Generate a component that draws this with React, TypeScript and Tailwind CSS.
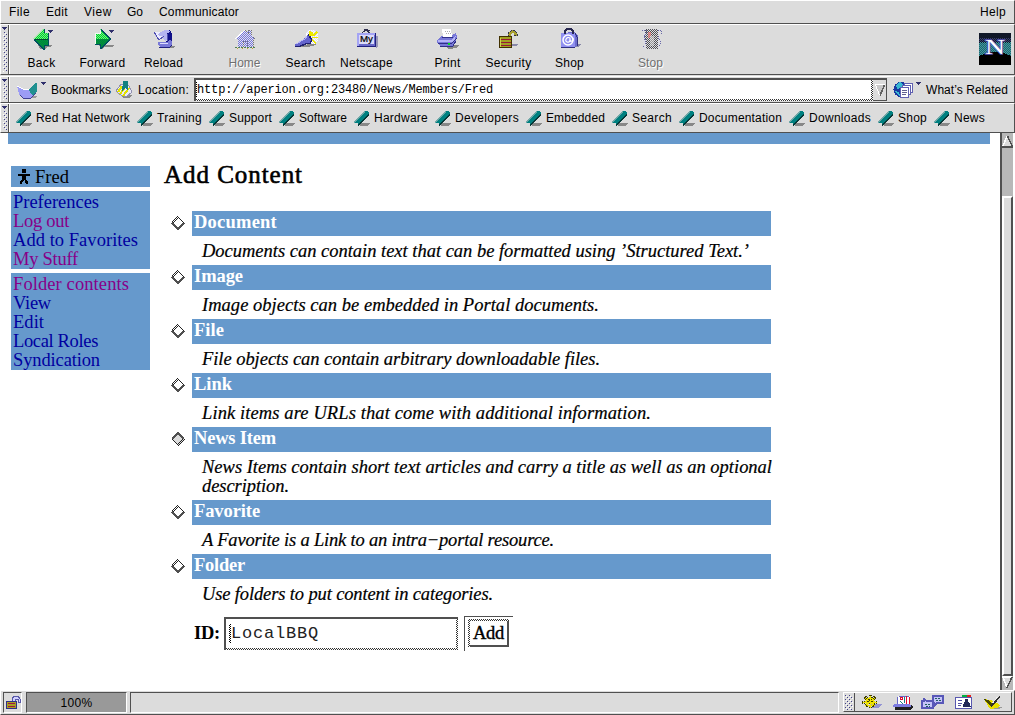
import { useLayoutEffect, useRef, type ReactNode } from "react";

const DITHER = "bg-[repeating-conic-gradient(#333_0_25%,#fff_0_50%)] bg-[length:2px_2px]";
const RAISED = "border-t border-l border-b border-r border-t-white border-l-white border-b-[#505050] border-r-[#505050]";
const SUNKEN = "border-t border-l border-b border-r border-t-[#505050] border-l-[#505050] border-b-white border-r-white";

/** Single line of text whose tracking is adjusted so that it spans `w` pixels. */
function Fit({ w, className = "", children }: { w: number; className?: string; children: string }) {
  const ref = useRef<HTMLSpanElement>(null);
  useLayoutEffect(() => {
    const el = ref.current;
    if (!el) return;
    el.style.letterSpacing = "0px";
    const natural = el.getBoundingClientRect().width;
    el.style.letterSpacing = `${(w - natural) / children.length}px`;
  }, [w, children]);
  return (
    <span ref={ref} className={`inline-block whitespace-pre ${className}`}>
      {children}
    </span>
  );
}

function Svg({ w, h, children, className = "" }: { w: number; h: number; children: ReactNode; className?: string }) {
  return (
    <svg width={w} height={h} viewBox={`0 0 ${w} ${h}`} shapeRendering="crispEdges" className={`block shrink-0 ${className}`}>
      {children}
    </svg>
  );
}

function Defs() {
  return (
    <svg width="0" height="0" className="absolute">
      <defs>
        <pattern id="dg" width="2" height="2" patternUnits="userSpaceOnUse">
          <rect width="2" height="2" fill="#00d030" />
          <path d="M0 0h1v1H0zM1 1h1v1H1z" fill="#70f080" />
        </pattern>
        <pattern id="dd" width="2" height="2" patternUnits="userSpaceOnUse">
          <rect width="2" height="2" fill="#008040" />
          <path d="M0 0h1v1H0zM1 1h1v1H1z" fill="#009838" />
        </pattern>
        <pattern id="dp" width="2" height="2" patternUnits="userSpaceOnUse">
          <path d="M0 0h1v1H0zM1 1h1v1H1z" fill="#7474dc" />
        </pattern>
        <pattern id="dk" width="2" height="2" patternUnits="userSpaceOnUse">
          <path d="M0 0h1v1H0zM1 1h1v1H1z" fill="#222" />
        </pattern>
        <pattern id="dt" width="2" height="2" patternUnits="userSpaceOnUse">
          <path d="M0 0h1v1H0zM1 1h1v1H1z" fill="#409c9c" />
        </pattern>
        <pattern id="dots" width="4" height="4" patternUnits="userSpaceOnUse">
          <path d="M0 0h1v1H0zM2 2h1v1H2z" fill="#404088" />
          <path d="M1 1h1v1H1zM3 3h1v1H3z" fill="#fff" />
        </pattern>
      </defs>
    </svg>
  );
}

const Caret = ({ x, y }: { x: number; y: number }) => (
  <path d={`M${x} ${y}h5v1h-1v1h-1v1h-1v-1h-1v-1h-1z`} fill="#30306c" />
);

const icons: Record<string, ReactNode> = {
  Back: (
    <>
      <path d="M8 17h14l-2 2h-3l-2 2h-5z" fill="#888" />
      <path d="M4 11 13 1h2v4h3v6z" fill="url(#dg)" />
      <path d="M4 11h14v6h-3v4h-2z" fill="url(#dd)" />
      <path d="M3.500 11 13 1.500" fill="none" stroke="#b0e8b0" />
      <path d="M14.500 1v4M18.500 5v12h-4v4h-1L4 11.500" fill="none" stroke="#005060" />
      <path d="M5 11.500h13" stroke="#004830" />
      <Caret x={18} y={2} />
    </>
  ),
  Forward: (
    <>
      <path d="M8 17h16l-3 2h-7l-3 2z" fill="#888" />
      <path d="M4 5h5V1h1l10 10H4z" fill="url(#dg)" />
      <path d="M4 11h16L10 21H9v-4H4z" fill="url(#dd)" />
      <path d="M4.500 16V5.500h5V1.500" fill="none" stroke="#f0fff0" />
      <path d="M10 1.500l9.500 9.500M4 16.500h5V20.500h1l10-10" fill="none" stroke="#005060" />
      <Caret x={18} y={2} />
    </>
  ),
  Reload: (
    <>
      <path d="M8 18h15l-2 2H10z" fill="#888" />
      <path d="M13 2h5l2 4v9l-5 3-3-3 3-3z" fill="#101088" />
      <path d="M9 4l4-2h4l1 2-3 1 0 7-2 1-3-4-4 3-4-7z" fill="#b4b4f0" />
      <path d="M2 4h6l-2 3 5 2-2 2H6z" fill="#ececff" />
      <path d="M2 4l5 8 5-4M15 6v7" fill="none" stroke="#5050b0" />
      <path d="M6 14h9l3-2 2 1v5l-3 1H8l-2-2z" fill="#7878d8" />
      <path d="M7 19h11l2-2" fill="none" stroke="#202080" />
      <path d="M8 15.500h8" stroke="#dcdcff" />
    </>
  ),
  Home: (
    <>
      <path d="M2 11 12 2l3 3V2h3v5l4 4h-2v8H5v-8z" fill="#e4e4ec" />
      <path d="M2 11 12 2l10 9h-2v8H5v-8H2zM15 5V2h3v6z" fill="url(#dp)" />
      <path d="M2 11 12 2" fill="none" stroke="#fff" />
      <path d="M12 2l3 3V2h3v5l4 4M20 12v7M10 19v-6h4v6" fill="none" stroke="#777" strokeDasharray="1 1" />
      <path d="M2 19.500h21" stroke="#508050" strokeDasharray="2 1" />
      <path d="M4 20.500h18" stroke="#c0a030" strokeDasharray="1 4" />
    </>
  ),
  Search: (
    <>
      <path d="M12 4l3-2h6l3 4v6l-3 4h-6l-3-4z" fill="#fff" />
      <path d="M12 4l3-2h6l3 4v6l-3 4h-6z" fill="url(#dp)" opacity=".25" />
      <path d="M5 19l10-3h8l-4 2-6 1z" fill="#888" />
      <path d="M1 16l9-5 1-2 3-2 4 5-2 4-4 0-7 3H2z" fill="#6464cc" />
      <path d="M2 16l9-5 2-3" fill="none" stroke="#b4b4f8" />
      <path d="M1 18.500h4l8-3h3l2-4-4-5" fill="none" stroke="#202070" strokeWidth="1.500" />
      <path d="M16 3v4h2V4M19 8l4-4M18 9.500h6M18 12l4 3" stroke="#ece800" fill="none" strokeWidth="1.500" />
    </>
  ),
  Netscape: (
    <>
      <path d="M4 20h17V8h2v10l-2 2H5z" fill="#9898b8" />
      <path d="M2 5h19v14H2z" fill="#6868c8" />
      <path d="M2 5h18v2H4v11H2z" fill="#a4a4f4" />
      <path d="M4 7h15v9H4z" fill="#dadaf8" />
      <path d="M2 18.500h18.500V5" fill="none" stroke="#202080" />
      <path d="M7 5 11 2l4 3M9 1.500h3v2M13 3l2-1" fill="none" stroke="#303050" />
      <text x="5" y="14" fontSize="9" fontFamily="Liberation Sans" textLength="13" lengthAdjust="spacingAndGlyphs" stroke="#000" strokeWidth=".2">My</text>
    </>
  ),
  Print: (
    <>
      <path d="M8 17h16l-4 3-7 1z" fill="#888" />
      <path d="M1 12l5-4h9l5-3 1 4-1 4-3 5H5l-4-3z" fill="#7878d8" />
      <path d="M2 12h14l4-5-1 4-3 3H2z" fill="#b4b4f8" />
      <path d="M6 1h9l1 8H7z" fill="#fff" />
      <path d="M9 3.500h5M10 5.500h5" stroke="#aaa" strokeDasharray="1 1" />
      <path d="M6 9.500h11M2 15h14l5-5M4 18h13l3-5" fill="none" stroke="#303088" />
      <path d="M12 16h2" stroke="#00e020" strokeWidth="2" />
    </>
  ),
  Security: (
    <>
      <path d="M14 16h8l-3 2h-5z" fill="#8888a8" />
      <path d="M11 9V5l3-3h4l2 3v3h-3V5h-2l-1 1v4z" fill="#a8a030" />
      <path d="M11.500 9V5l3-2.500h3l2.500 3v2h-3V5.500" fill="none" stroke="#303050" strokeDasharray="2 1" />
      <path d="M2 9h13v11H2z" fill="#a0a020" />
      <path d="M4 11.500h10M4 14.500h10M4 17.500h10" stroke="#981838" />
      <path d="M2.500 8.500h12v11h-12z" fill="none" stroke="#403000" />
      <path d="M3 10v9" stroke="#d0d050" />
    </>
  ),
  Shop: (
    <>
      <path d="M15 16h9l-4 3h-5z" fill="#8888a8" />
      <path d="M3 5l13-1 4 3v10l-3 2H3z" fill="#6c6ccc" />
      <path d="M3 5h14v14H3z" fill="#9090f0" />
      <path d="M7 6V3l2-2h4l2 2v3" fill="none" stroke="#282850" strokeWidth="1.500" />
      <path d="M17 5l2 4v9M3 19h14" fill="none" stroke="#303080" />
      <circle cx="10" cy="12" r="5" fill="none" stroke="#fff" shapeRendering="auto" strokeWidth="1.500" />
      <path d="M12 14V10c-3-2-6 3-3 4s3-2 3-3c0 4 4 2 3-1" fill="none" stroke="#fff" shapeRendering="auto" strokeWidth="1.200" />
    </>
  ),
  Stop: (
    <>
      <path d="M3 1h19l-2 6 2 5-2 5 1 4H4l1-5-2-4 2-5z" fill="#dcdce4" />
      <path d="M6 1h13v20H7z" fill="url(#dk)" opacity=".75" />
      <path d="M3 2h4v4l-2 3 2 5-3 5M19 2h3v4l-3 3 3 5-2 5" fill="none" stroke="#6868a8" strokeDasharray="1 1" />
      <path d="M9 4h3v4h-1v2H9z" fill="#f08080" opacity=".7" />
      <path d="M11 8h4v10h-4z" fill="#ddd" opacity=".5" />
    </>
  ),
};

const tools: { n: string; w: number; off?: boolean; gap?: boolean }[] = [
  { n: "Back", w: 28 },
  { n: "Forward", w: 46 },
  { n: "Reload", w: 39 },
  { n: "Home", w: 32, off: true, gap: true },
  { n: "Search", w: 40 },
  { n: "Netscape", w: 53 },
  { n: "Print", w: 26, gap: true },
  { n: "Security", w: 46 },
  { n: "Shop", w: 29 },
  { n: "Stop", w: 25, off: true, gap: true },
];

const links: [string, number][] = [
  ["Red Hat Network", 94],
  ["Training", 45],
  ["Support", 43],
  ["Software", 48],
  ["Hardware", 54],
  ["Developers", 64],
  ["Embedded", 59],
  ["Search", 40],
  ["Documentation", 83],
  ["Downloads", 62],
  ["Shop", 29],
  ["News", 31],
];

type Entry = { title: string; w: number; lines: [string, number][]; on?: boolean };
const entries: Entry[] = [
  { title: "Document", w: 83, lines: [["Documents can contain text that can be formatted using ’Structured Text.’", 547]] },
  { title: "Image", w: 49, lines: [["Image objects can be embedded in Portal documents.", 397]] },
  { title: "File", w: 30, lines: [["File objects can contain arbitrary downloadable files.", 398]] },
  { title: "Link", w: 38, lines: [["Link items are URLs that come with additional information.", 449]] },
  {
    title: "News Item",
    w: 82,
    on: true,
    lines: [
      ["News Items contain short text articles and carry a title as well as an optional", 570],
      ["description.", 87],
    ],
  },
  { title: "Favorite", w: 66, lines: [["A Favorite is a Link to an intra−portal resource.", 352]] },
  { title: "Folder", w: 51, lines: [["Use folders to put content in categories.", 291]] },
];

const BookmarkLeaf = () => (
  <Svg w={16} h={17}>
    <path d="M5 13h11l-2 3H6z" fill="#888" />
    <path d="M0 13 11 1h2l2 2v1L4 15v-2z" fill="#008080" />
    <path d="M0 12.500 11 1.500" stroke="#70a8a8" />
    <path d="M4 15.500 15 4.500" fill="none" stroke="#083838" />
  </Svg>
);

function Grip({ h }: { h: number }) {
  return (
    <div className="w-2 shrink-0 border-r border-[#505050] pl-px pt-px">
      <Svg w={6} h={h}>
        <rect x="1" y="6" width="4" height={h - 8} fill="url(#dots)" />
        <Caret x={0} y={1} />
      </Svg>
    </div>
  );
}

function MenuBar() {
  const items: [string, number, string][] = [
    ["File", 21, "ml-[8px]"],
    ["Edit", 22, "ml-[16px]"],
    ["View", 28, "ml-[16px]"],
    ["Go", 16, "ml-[15px]"],
    ["Communicator", 80, "ml-[16px]"],
  ];
  return (
    <div className={`flex h-6 w-full items-center ${RAISED}`}>
      {items.map(([t, w, m]) => (
        <Fit key={t} w={w} className={m}>{t}</Fit>
      ))}
      <Fit w={26} className="mr-2 ml-auto">Help</Fit>
    </div>
  );
}

function Toolbar() {
  return (
    <div className={`flex h-[51px] ${RAISED}`}>
      <Grip h={48} />
      <div className="flex flex-1 border-l border-white pl-px">
        {tools.map((t) => (
          <div key={t.n} className={`flex w-[61px] shrink-0 flex-col items-center pt-[3px] ${t.gap ? "ml-5" : ""}`}>
            <Svg w={24} h={22}>{icons[t.n]}</Svg>
            <Fit w={t.w} className={`mt-[6px] leading-[14px] ${t.off ? "text-[#707070] [text-shadow:1px_1px_0_#fff]" : ""}`}>{t.n}</Fit>
          </div>
        ))}
        <Svg w={32} h={32} className="mt-2 mr-[3px] ml-auto">
          <rect width="32" height="32" fill="#101828" />
          <rect y="5" width="32" height="6" fill="url(#dp)" opacity=".4" />
          <rect y="10" width="32" height="13" fill="#206070" />
          <rect y="9" width="32" height="14" fill="url(#dt)" />
          <path d="M0 23l5-2 6-2h10l6 2 5 2v9H0z" fill="#000" />
          <text x="6" y="20.500" fontFamily="Liberation Serif" fontSize="22" textLength="20" lengthAdjust="spacingAndGlyphs" fill="#fff" stroke="#5050b0" strokeWidth="1.500" paintOrder="stroke">N</text>
        </Svg>
      </div>
    </div>
  );
}

function LocationBar() {
  return (
    <div className={`mt-px flex h-[27px] ${RAISED}`}>
      <Grip h={24} />
      <div className="flex flex-1 items-center border-l border-white">
        <Svg w={30} h={18} className="ml-[6px]">
          <path d="M8 15h13l-2 2h-9z" fill="#999" />
          <path d="M1 5l6 3h7l5-3 1 1v7l-5 4H6l-3-4z" fill="#9c9cf4" />
          <path d="M1 5l6 3h7l4-3" fill="none" stroke="#fff" />
          <path d="M13 8l6-6h2v9l-4 3-3-2z" fill="#209090" />
          <path d="M4 14l3 3h8l5-5" fill="none" stroke="#404090" />
          <Caret x={25} y={1} />
        </Svg>
        <Fit w={60} className="ml-[5px]">Bookmarks</Fit>
        <Svg w={17} h={17} className="ml-[5px]">
          <path d="M5 14h11l-3 3H7z" fill="#888" />
          <path d="M0 10 5 3l8 2 3 6-6 5-7-3z" fill="#e8e8f8" stroke="#9090b0" />
          <path d="M2 11l4-6M4 13l6-8M7 15l6-8" stroke="#e0e000" strokeWidth="2" />
          <path d="M7 0h5v10l-3-3-3 3z" fill="#108080" />
        </Svg>
        <Fit w={51} className="ml-[5px]">Location:</Fit>
        <div className="ml-[5px] flex h-[23px] w-[693px] border-t-2 border-l-2 border-[#505050]">
          <div className={`flex flex-1 pr-[2px] pb-[2px] ${DITHER}`}>
            <div className="flex flex-1 items-center bg-white">
              <div className="h-[15px] w-px border-l border-dotted border-black" />
              <Fit w={296} className="font-['Liberation_Mono',monospace] text-[12px] text-black">http://aperion.org:23480/News/Members/Fred</Fit>
            </div>
          </div>
          <div className="flex w-[14px] items-center justify-center border-r border-b border-[#505050]">
            <Svg w={10} h={12}>
              <path d="M0 0h10L5 12z" fill="#c8c8c8" />
              <path d="M0 .5h10M.5 1l4 10" stroke="#fff" />
              <path d="M5 11.500 9.500 1" stroke="#606060" strokeWidth="1.500" />
            </Svg>
          </div>
        </div>
        <Svg w={28} h={18} className="ml-[6px]">
          <circle cx="8" cy="8.500" r="7.500" fill="#1838a0" />
          <path d="M3 4l4-3 3 2-2 4-4 1zM2 10l4 1 1 4-3-2z" fill="#38b8d0" />
          <path d="M11.500 2.500h8v9h-8z" fill="#fff" stroke="#6060b0" />
          <path d="M9.500 4.500h8v9h-8z" fill="#fff" stroke="#6060b0" />
          <path d="M7.500 6.500h8v10h-8z" fill="#fff" stroke="#6060b0" />
          <path d="M9 9.500h5M9 11.500h5M9 13.500h4" stroke="#606090" />
          <Caret x={23} y={1} />
        </Svg>
        <Fit w={82} className="ml-[5px]">What’s Related</Fit>
      </div>
    </div>
  );
}

function PersonalBar() {
  return (
    <div className={`flex h-[30px] ${RAISED}`}>
      <Grip h={27} />
      <div className="flex flex-1 items-center border-l border-white pl-[6px]">
        {links.map(([t, w]) => (
          <div key={t} className="mr-[7px] flex items-center gap-1">
            <BookmarkLeaf />
            <Fit w={w}>{t}</Fit>
          </div>
        ))}
      </div>
    </div>
  );
}

function SideLink({ w, visited, children }: { w: number; visited?: boolean; children: string }) {
  return (
    <div className={`h-[19px] leading-[19px] ${visited ? "text-[#880088]" : "text-[#0000a0]"}`}>
      <Fit w={w}>{children}</Fit>
    </div>
  );
}

function Sidebar() {
  return (
    <div className="mt-[22px] ml-[11px] flex w-[139px] shrink-0 flex-col gap-1">
      <div className="flex h-[21px] items-center bg-[#6699cc] pl-[7px]">
        <Svg w={12} h={15}>
          <path d="M4 0h4v4H4zM0 5h12v2H8v3l2 3v2H8l-1-3-1-1-1 1-1 3H2v-2l2-3V7H0z" />
        </Svg>
        <Fit w={34} className="ml-[5px]">Fred</Fit>
      </div>
      <div className="bg-[#6699cc] pt-[2px] pl-[2px]">
        <SideLink w={86}>Preferences</SideLink>
        <SideLink w={56} visited>Log out</SideLink>
        <SideLink w={125}>Add to Favorites</SideLink>
        <SideLink w={65} visited>My Stuff</SideLink>
      </div>
      <div className="bg-[#6699cc] pt-[2px] pl-[2px]">
        <SideLink w={116} visited>Folder contents</SideLink>
        <SideLink w={38}>View</SideLink>
        <SideLink w={31}>Edit</SideLink>
        <SideLink w={85}>Local Roles</SideLink>
        <SideLink w={87}>Syndication</SideLink>
      </div>
    </div>
  );
}

const Radio = ({ on }: { on?: boolean }) => (
  <Svg w={14} h={14} className="mt-[5px]">
    <path d="M1 7 7 1l6 6-6 6z" fill={on ? "#dcdcdc" : "#fff"} />
    <path d="M1 7l6 6 6-6" fill="none" stroke={on ? "url(#dk)" : "#505050"} strokeWidth="2" />
    <path d="M1 7l6-6 6 6" fill="none" stroke={on ? "#505050" : "url(#dk)"} strokeWidth="2" />
  </Svg>
);

function Main() {
  return (
    <div className="ml-[14px] flex-1 pt-[16px]">
      <h2 className="h-[51px] text-[25px] leading-[30px] [-webkit-text-stroke:0.6px_#000]">
        <Fit w={139}>Add Content</Fit>
      </h2>
      {entries.map((e) => (
        <div key={e.title} className="flex">
          <div className="w-7 shrink-0 pl-[7px]">
            <Radio on={e.on} />
          </div>
          <div className="w-[579px]">
            <div className="h-[25px] bg-[#6699cc] pl-[2px] leading-[22px] font-bold text-white">
              <Fit w={e.w}>{e.title}</Fit>
            </div>
            <div className="pt-[6px] pb-1 pl-[10px] italic [-webkit-text-stroke:0.2px_#000]">
              {e.lines.map(([t, w]) => (
                <div key={t} className="h-[19px] leading-[19px]">
                  <Fit w={w}>{t}</Fit>
                </div>
              ))}
            </div>
          </div>
        </div>
      ))}
      <div className="mt-[8px] flex h-[35px] items-start pl-[30px]">
        <Fit w={26} className="mt-[7px] leading-[20px] font-bold">ID:</Fit>
        <div className="mt-px ml-1 flex h-[33px] w-[234px] border-t-2 border-l-2 border-[#505050]">
          <div className={`flex flex-1 pr-[2px] pb-[2px] ${DITHER}`}>
            <div className="flex flex-1 items-center bg-white pl-[3px]">
              <div className="h-[19px] w-[2px] bg-[repeating-conic-gradient(#000_0_25%,#fff_0_50%)] bg-[length:2px_2px]" />
              <Fit w={88} className="font-['Liberation_Mono',monospace] text-[17px] text-[#222]">LocalBBQ</Fit>
            </div>
          </div>
        </div>
        <div className="ml-[6px] h-[35px] w-[49px] border-t border-l border-[#505050] pt-[2px] pl-[3px]">
          <div className={`h-[28px] w-[41px] pt-[2px] pl-[2px] ${DITHER}`}>
            <div className="flex h-[26px] w-[39px] items-center border-r-2 border-b-2 border-[#505050] bg-white pl-[3px]">
              <Fit w={31} className="[-webkit-text-stroke:0.4px_#000]">Add</Fit>
            </div>
          </div>
        </div>
      </div>
    </div>
  );
}

function Scrollbar() {
  return (
    <div className="flex w-[15px] shrink-0 border-r border-white pr-px">
      <div className="flex w-full flex-col border-l-2 border-[#505050] bg-[#b8b8b8]">
        <Svg w={11} h={13} className="mt-[2px]">
          <path d="M5 1 11 12H0z" fill="#dcdcdc" />
          <path d="M5 1 .5 12" stroke="#fff" strokeWidth="1.500" />
          <path d="M5.500 1l5 11H0" fill="none" stroke="#505050" strokeWidth="1.500" />
        </Svg>
        <div className="mt-[48px] flex-1 border-t-2 border-r-2 border-b-2 border-l-2 border-t-white border-r-[#505050] border-b-[#505050] border-l-white bg-[#dcdcdc]" />
        <Svg w={11} h={13} className="mb-[1px]">
          <path d="M0 1h11L5 12z" fill="#dcdcdc" />
          <path d="M0 1h10M1 1l4 11" stroke="#fff" strokeWidth="1.500" />
          <path d="M5 12 10 1" stroke="#505050" strokeWidth="1.500" />
        </Svg>
      </div>
    </div>
  );
}

function StatusBar() {
  return (
    <div className={`flex h-[25px] w-full pt-px pl-[2px] ${RAISED}`}>
      <div className={`flex h-[21px] w-[19px] items-center ${SUNKEN}`}>
        <Svg w={16} h={15} className="ml-px">
          <path d="M7 6V4l2-3h4l2 3v3h-2V4h-3v4z" fill="#d0d0ff" stroke="#5858a8" />
          <path d="M1 6.500h10v7H1z" fill="#a8a020" stroke="#303088" />
          <path d="M3 8.500h7M3 11.500h7" stroke="#a01840" />
        </Svg>
      </div>
      <div className={`ml-[4px] flex h-[21px] w-[101px] items-center justify-center bg-[#999] ${SUNKEN}`}>
        <Fit w={32}>100%</Fit>
      </div>
      <div className={`ml-[3px] h-[21px] w-[709px] ${SUNKEN}`} />
      <div className={`ml-[4px] flex h-[20px] w-[169px] ${RAISED}`}>
        <div className="w-[11px] border-r border-[#505050] pt-[2px] pl-px">
          <Svg w={8} h={15}>
            <rect width="8" height="15" fill="url(#dots)" />
          </Svg>
        </div>
        <div className="flex items-center gap-[11px] pl-[6px]">
          <Svg w={21} h={15}>
            <path d="M10 9h11l-4 4h-6z" fill="#9494d4" />
            <path d="M9 0v14M1 7h16M4 2l10 10M14 2 4 12" stroke="#404000" strokeDasharray="1 1" strokeWidth="3" />
            <circle cx="9" cy="7" r="4" fill="none" stroke="#e8dc00" strokeWidth="1.500" />
            <path d="M9 1v12M2 7h14M4 3l10 8M14 3l-10 8" stroke="#f0e400" />
          </Svg>
          <Svg w={20} h={15}>
            <path d="M3 10h16l1 2-2 3H2z" fill="#202020" />
            <path d="M5 1h12v9H4z" fill="#fff" />
            <path d="M4.500 10V2M6 1.500h10" stroke="#6868c8" fill="none" />
            <path d="M7 2h2v2H7zM13 1v8M16 2v8" stroke="#e01030" fill="none" />
            <path d="M11 2v6M7 6l3 3" stroke="#208080" />
            <path d="M1 9h14l3 1v2H0z" fill="#7c7ce0" />
          </Svg>
          <Svg w={23} h={15} className="-ml-[3px]">
            <path d="M3 6V4l3 2h6v7H1V6z" fill="#c4c4f8" stroke="#5858b8" strokeWidth="1.500" />
            <path d="M12 1h10v7h-6l-3 3V8h-1z" fill="#c4c4f8" stroke="#5858b8" strokeWidth="1.500" />
            <path d="M4 9.500h5M5 11.500h4M14 3.500h5M15 5.500h5" stroke="#206060" strokeDasharray="2 1" />
          </Svg>
          <Svg w={17} h={14}>
            <path d="M.5 2.500h16v11H.5z" fill="#fff" stroke="#5858b0" />
            <path d="M3 5.500h4M3 8.500h4M3 10.500h3" stroke="#5050a0" />
            <path d="M10 4h3v3h1l2 5H8l1-5h1z" fill="#202858" />
            <path d="M7 1h5" stroke="#00b040" strokeWidth="2" />
            <path d="M12 1h4" stroke="#e02020" strokeWidth="2" />
          </Svg>
          <Svg w={20} h={15}>
            <path d="M8 12h12l-4 2H8z" fill="#999" />
            <path d="M1 4l5 1 5 1 6 4-3 3-7 1z" fill="#e8e000" />
            <path d="M1 4l7 8 2-2-5-5z" fill="#484800" />
            <path d="M9 9l7-8 1 1-6 8-3 2z" fill="#303030" />
            <path d="M9.500 8l5-6" stroke="#eee" />
          </Svg>
        </div>
      </div>
    </div>
  );
}

export default function App() {
  return (
    <div className="flex h-[715px] w-[1015px] flex-col overflow-hidden bg-[#dcdcdc] font-['Liberation_Sans',sans-serif] text-[12px] leading-[14px] text-black">
      <Defs />
      <MenuBar />
      <Toolbar />
      <LocationBar />
      <PersonalBar />
      <div className="flex h-[557px] bg-white font-['Liberation_Serif',serif] text-[18.5px]">
        <div className="flex flex-1 flex-col">
          <div className="ml-2 h-[11px] w-[982px] bg-[#6699cc]" />
          <div className="flex flex-1">
            <Sidebar />
            <Main />
          </div>
        </div>
        <Scrollbar />
      </div>
      <StatusBar />
    </div>
  );
}
